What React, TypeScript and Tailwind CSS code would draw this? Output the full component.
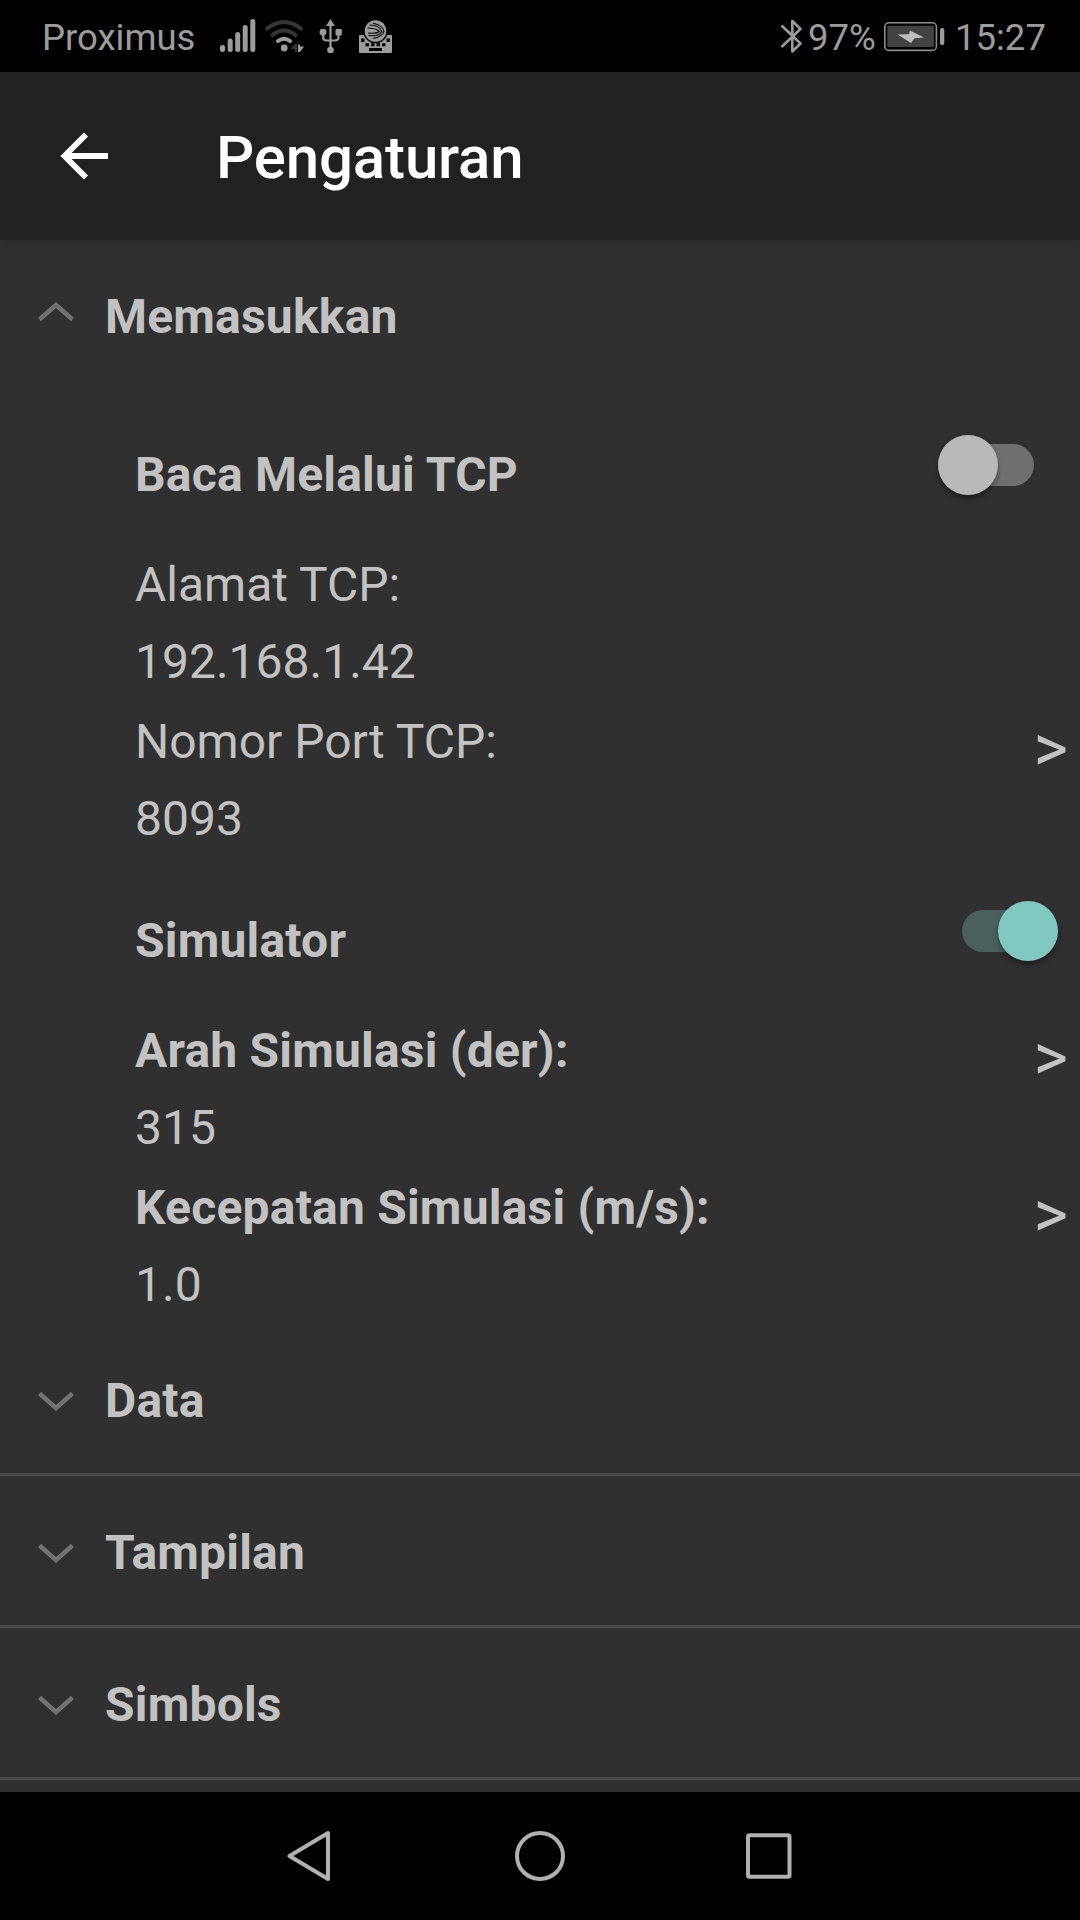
import React from "react";

function StatusBar() {
  return (
    <div className="flex h-[72px] items-center bg-black pl-[42px] pr-[36px] text-[36.5px] leading-[44px] text-[#9c9c9c]">
      <span className="w-[178px] shrink-0 pt-[4px]">Proximus</span>
      <svg className="shrink-0" width="180" height="72" viewBox="220 0 180 72" fill="none" stroke="#9c9c9c">
        <g strokeWidth="5" strokeLinecap="round">
          <path d="M222.5 47.5V49.5M230.2 41V49.5M237.7 34.5V49.5M245.2 27.5V49.5M252.8 21.5V49.5" />
        </g>
        <g strokeWidth="4" strokeLinecap="round">
          <path d="M267 28.5Q284 15.5 301 28.5M272.5 35Q284 26 295.5 35" stroke="#353535" />
          <path d="M278 41Q284 36.500 290 41" />
        </g>
        <circle cx="284.2" cy="48" r="3.4" fill="#9c9c9c" stroke="none" />
        <path d="M295 44L290.5 49H295V52H297V44Z" fill="#353535" stroke="none" />
        <path d="M298 44.5L300 44.5V46.5L304 46.5L300 52H298Z" fill="#9c9c9c" stroke="none" />
        <g strokeWidth="2.2">
          <path d="M330.5 23V49M323.2 33V37.5Q323.2 40.5 326.5 40.5H334.5Q338.5 40.5 338.5 37.5V33" />
          <path d="M330.5 19L335 26H326Z" fill="#9c9c9c" stroke="none" />
          <circle cx="323" cy="32.2" r="3.4" fill="#9c9c9c" stroke="none" />
          <rect x="335.5" y="29" width="6.3" height="6.4" rx="1" fill="#9c9c9c" stroke="none" />
          <circle cx="330.5" cy="50" r="3.3" fill="#9c9c9c" stroke="none" />
        </g>
        <path d="M360 35H391Q392 35 392 36V52Q392 53 391 53H360Q359 53 359 52V36Q359 35 360 35Z" fill="#9c9c9c" stroke="none" />
        <circle cx="375.5" cy="31" r="12.3" fill="#000" stroke="none" />
        <circle cx="375.5" cy="31" r="10.8" fill="#9c9c9c" stroke="none" />
        <path d="M369.500 25Q379 25 382 31.500Q378 37 368.500 35.500M373 23.200Q383 25 384 31.500Q382 37 373 38.500M367.500 28Q376 28 379.500 31.500Q376 34 368 33" stroke="#000" strokeWidth="1.1" />
        <path d="M361 38.5H364.5V42H361ZM386.5 38.5H390V42H386.5ZM365.5 43.2H369V46.2H365.5ZM371 43.2H374.5V46.2H371ZM376.5 43.2H380V46.2H376.5ZM382 43.2H385.5V46.2H382ZM369 48H382V51H369Z" fill="#000" stroke="none" />
      </svg>
      <div className="grow" />
      <svg className="shrink-0" width="24" height="72" viewBox="780 0 24 72" fill="none" stroke="#9c9c9c" strokeWidth="2.6" strokeLinejoin="round">
        <path d="M781.5 25.5L800.5 43.5L792.3 51.5V21L800.5 29L781.5 47" />
      </svg>
      <span className="w-[79px] shrink-0 pt-[4px] pl-[4px]">97%</span>
      <svg className="shrink-0" width="62" height="72" viewBox="883 0 62 72">
        <rect x="884.8" y="22.8" width="51.6" height="27.6" rx="4" fill="none" stroke="#8c8c8c" strokeWidth="1.6" />
        <rect x="887.3" y="25.7" width="46.6" height="21.3" rx="1" fill="#424242" />
        <rect x="940" y="28" width="4.3" height="17" rx="2" fill="#9c9c9c" />
        <path d="M910 30.5L924 37.5L914.5 38.2L911 43L897.5 34.5L909 34.2Z" fill="#bdbdbd" />
      </svg>
      <span className="w-[99px] shrink-0 whitespace-nowrap pt-[4px] pl-[10px]">15:27</span>
    </div>
  );
}

function Chevron({ up = false }: { up?: boolean }) {
  return (
    <svg className="ml-[36px] mr-[29px] shrink-0" width="40" height="56" viewBox="0 0 40 56" fill="none" stroke="#727272" strokeWidth="4.4">
      <path d={up ? "M3.5 30.5L20 16L36.5 30.5" : "M3.5 20.5L20 35L36.5 20.5"} />
    </svg>
  );
}

function Section({ title }: { title: string }) {
  return (
    <div className="flex h-[152px] border-b-[3px] border-[#4a4a4a] pt-[49px]">
      <Chevron />
      <h2 className="font-bold tracking-[0.2px]">{title}</h2>
    </div>
  );
}

function Toggle({ on }: { on: boolean }) {
  return on ? (
    <div className="mr-[22px] flex h-[42px] w-[96px] items-center justify-end rounded-full bg-[#4a605d]">
      <div className="h-[60px] w-[60px] shrink-0 rounded-full bg-[#80c8c1] shadow-[0_4px_5px_rgba(0,0,0,0.35)]" />
    </div>
  ) : (
    <div className="mr-[46px] flex h-[42px] w-[96px] items-center rounded-full bg-[#6f6f6f]">
      <div className="h-[60px] w-[60px] shrink-0 rounded-full bg-[#b9b9b9] shadow-[0_4px_5px_rgba(0,0,0,0.35)]" />
    </div>
  );
}

function ToggleRow({ label, on }: { label: string; on: boolean }) {
  return (
    <div className="flex h-[110px] shrink-0 items-start justify-between">
      <span className="font-bold tracking-[0.2px]">{label}</span>
      <div className="-mt-[3px]">
        <Toggle on={on} />
      </div>
    </div>
  );
}

type FieldProps = { label: string; value: string; bold?: boolean; arrow?: boolean };

function Field({ label, value, bold, arrow }: FieldProps) {
  return (
    <div className="flex h-[157px] shrink-0 justify-between">
      <div className="flex flex-col gap-[21px]">
        <span className={bold ? "font-bold tracking-[0.2px]" : ""}>{label}</span>
        <span>{value}</span>
      </div>
      {arrow && <span className="mr-[12px] pt-[7px] text-[66px] leading-[56px]">&gt;</span>}
    </div>
  );
}

export default function App() {
  return (
    <div className="flex h-[1920px] w-[1080px] flex-col overflow-hidden bg-[#303030] font-['Roboto',sans-serif]">
      <StatusBar />
      <header className="flex h-[168px] items-start bg-[#212121] pt-[48px] shadow-[0_2px_8px_rgba(0,0,0,0.15)]">
        <svg className="ml-[60px] shrink-0" width="48" height="72" viewBox="60 120 48 72" fill="none" stroke="#fff" strokeWidth="5.8">
          <path d="M108 156H65M86 134.5L64.5 156L86 177.5" />
        </svg>
        <h1 className="ml-[108px] pt-[3px] text-[60px] leading-[70px] font-medium tracking-[-0.15px] text-white">Pengaturan</h1>
      </header>
      <main className="flex h-[1552px] shrink-0 flex-col overflow-hidden text-[48px] leading-[56px] text-[#c2c2c2]">
        <div className="flex h-[207px] shrink-0 pt-[49px]">
          <Chevron up />
          <h2 className="font-bold tracking-[0.2px]">Memasukkan</h2>
        </div>
        <div className="flex h-[877px] shrink-0 flex-col pl-[135px]">
          <ToggleRow label="Baca Melalui TCP" on={false} />
          <Field label="Alamat TCP:" value="192.168.1.42" />
          <Field label="Nomor Port TCP:" value="8093" arrow />
          <div className="h-[42px] shrink-0" />
          <ToggleRow label="Simulator" on />
          <Field label="Arah Simulasi (der):" value="315" bold arrow />
          <Field label="Kecepatan Simulasi (m/s):" value="1.0" bold arrow />
        </div>
        <div className="shrink-0">
          <Section title="Data" />
          <Section title="Tampilan" />
          <Section title="Simbols" />
        </div>
      </main>
      <nav className="flex h-[128px] items-center justify-center bg-black">
        <svg width="506" height="56" viewBox="287 1828 506 56" fill="none" stroke="#b0b0b0" strokeWidth="4" strokeLinejoin="round">
          <path d="M289.5 1856L328 1833V1879Z" />
          <circle cx="540" cy="1856" r="23" />
          <rect x="748" y="1835.2" width="41.5" height="41.5" rx="1.5" />
        </svg>
      </nav>
    </div>
  );
}
